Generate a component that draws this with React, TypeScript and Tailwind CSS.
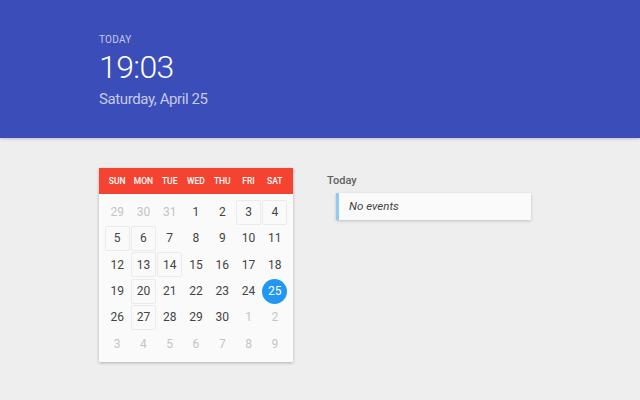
import React from 'react';

type Day = { n: number; muted?: boolean; boxed?: boolean; today?: boolean };

const weeks: Day[][] = [
  [{ n: 29, muted: true }, { n: 30, muted: true }, { n: 31, muted: true }, { n: 1 }, { n: 2 }, { n: 3, boxed: true }, { n: 4, boxed: true }],
  [{ n: 5, boxed: true }, { n: 6, boxed: true }, { n: 7 }, { n: 8 }, { n: 9 }, { n: 10 }, { n: 11 }],
  [{ n: 12 }, { n: 13, boxed: true }, { n: 14, boxed: true }, { n: 15 }, { n: 16 }, { n: 17 }, { n: 18 }],
  [{ n: 19 }, { n: 20, boxed: true }, { n: 21 }, { n: 22 }, { n: 23 }, { n: 24 }, { n: 25, today: true }],
  [{ n: 26 }, { n: 27, boxed: true }, { n: 28 }, { n: 29 }, { n: 30 }, { n: 1, muted: true }, { n: 2, muted: true }],
  [{ n: 3, muted: true }, { n: 4, muted: true }, { n: 5, muted: true }, { n: 6, muted: true }, { n: 7, muted: true }, { n: 8, muted: true }, { n: 9, muted: true }],
];

const dayNames = ['SUN', 'MON', 'TUE', 'WED', 'THU', 'FRI', 'SAT'];

function Cell({ d }: { d: Day }) {
  let cls = 'w-[25px] h-[25px] flex items-center justify-center text-[12px] ';
  if (d.today) cls += 'rounded-full bg-[#2196f3] text-white';
  else if (d.boxed) cls += 'border border-[#ebebeb] rounded-[2px] text-[#444]';
  else if (d.muted) cls += 'text-[#c4c4c4]';
  else cls += 'text-[#444]';
  return (
    <div className="w-[26.3px] h-[26.3px] flex items-center justify-center">
      <div className={cls}>{d.n}</div>
    </div>
  );
}

export default function App() {
  return (
    <div className="w-[640px] h-[400px] bg-[#eeeeee] overflow-hidden" style={{ fontFamily: 'Roboto, "Noto Sans", sans-serif' }}>
      {/* top header */}
      <div className="h-[138px] bg-[#3b4db8] pl-[99px] pt-[34px] shadow-[0_1px_3px_rgba(0,0,0,0.2)] relative">
        <div className="text-[10px] text-[#c5cae9] leading-[12px] tracking-wide">TODAY</div>
        <div className="text-[32px] font-light text-white leading-[36px] mt-[3px] tracking-[-0.6px]">19:03</div>
        <div className="text-[15px] text-[#c5cae9] leading-[18px] mt-[5px] tracking-[-0.4px]">Saturday, April 25</div>
      </div>

      <div className="flex pt-[30px] pl-[99px]">
        {/* calendar */}
        <div className="w-[194px] bg-[#fafafa] shadow-[0_1px_3px_rgba(0,0,0,0.25)]">
          <div className="h-[26px] bg-[#f44330] flex px-[5px] items-center">
            {dayNames.map((n) => (
              <div key={n} className="w-[26.3px] text-center text-[8.5px] font-medium text-white">{n}</div>
            ))}
          </div>
          <div className="px-[5px] pt-[5px] pb-[5px]">
            {weeks.map((w, i) => (
              <div key={i} className="flex">
                {w.map((d, j) => (
                  <Cell key={j} d={d} />
                ))}
              </div>
            ))}
          </div>
        </div>

        {/* events */}
        <div className="ml-[34px] pt-[6px]">
          <div className="text-[11px] font-medium text-[#616161] leading-[13px]">Today</div>
          <div className="ml-[9px] mt-[6px] w-[195px] h-[27px] bg-[#fafafa] border-l-[3px] border-[#90caf9] shadow-[0_1px_3px_rgba(0,0,0,0.2)] flex items-center pl-[10px]">
            <span className="text-[11.5px] italic text-[#424242]">No events</span>
          </div>
        </div>
      </div>
    </div>
  );
}
